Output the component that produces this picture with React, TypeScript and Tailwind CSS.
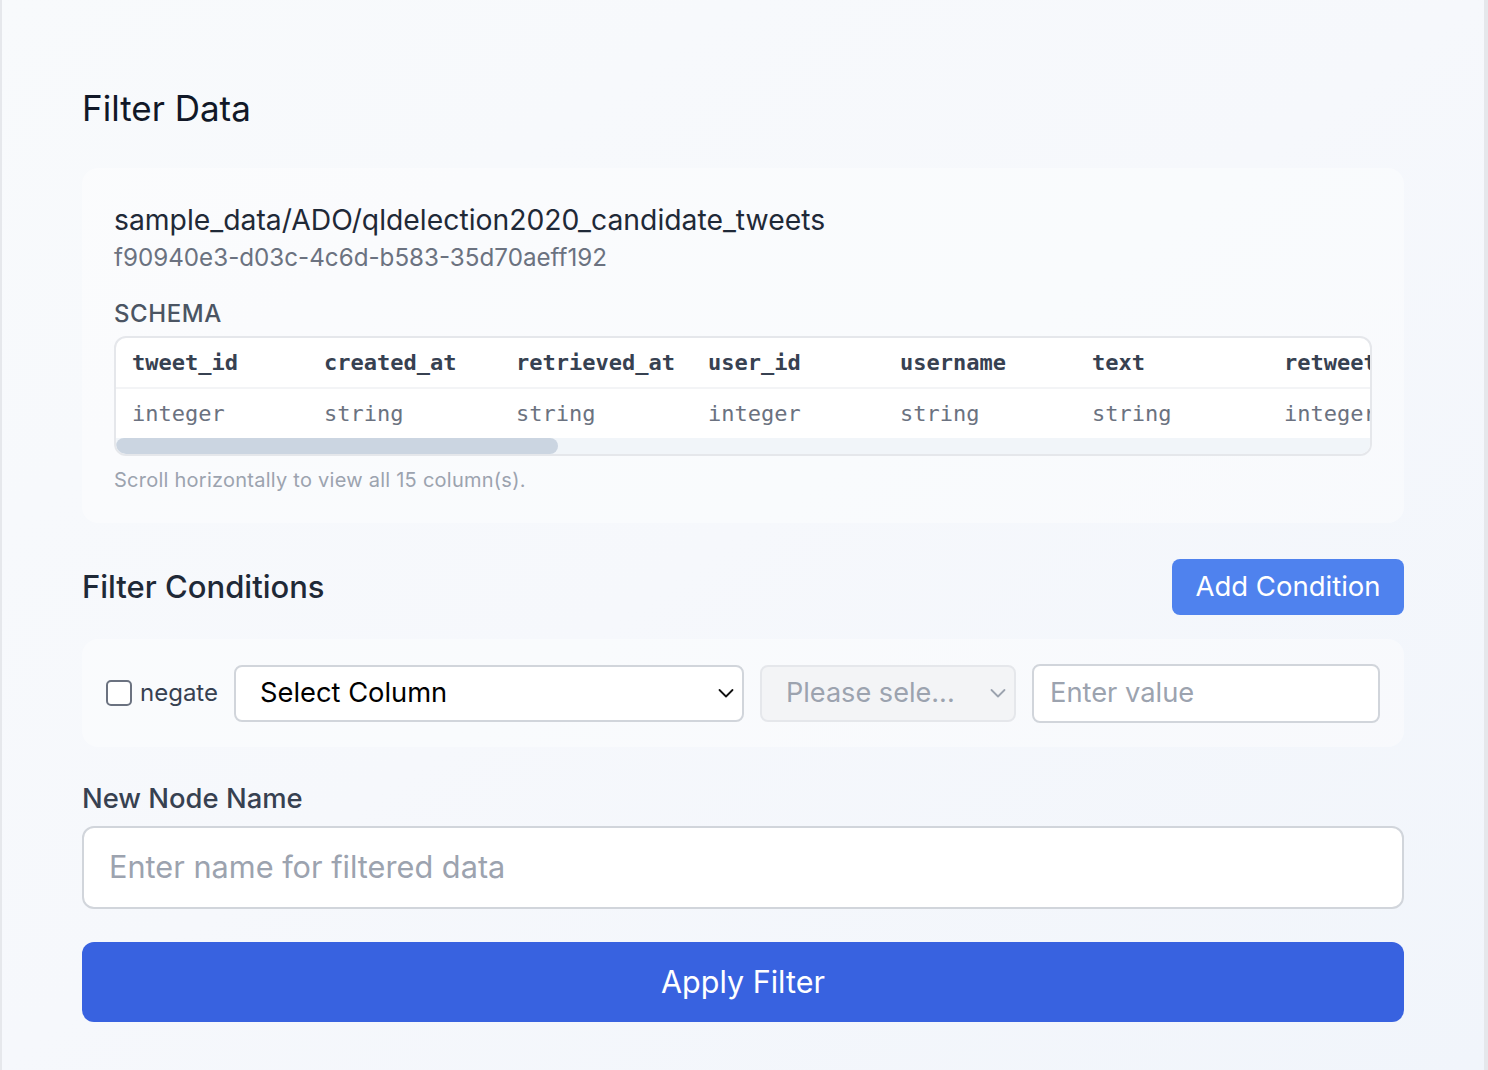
import React from "react";

const columns: [string, string, number][] = [
  ["tweet_id", "integer", 192],
  ["created_at", "string", 192],
  ["retrieved_at", "string", 192],
  ["user_id", "integer", 192],
  ["username", "string", 192],
  ["text", "string", 192],
  ["retweet_count", "integer", 240],
  ["favorite_count", "integer", 240],
  ["reply_count", "integer", 240],
  ["quote_count", "integer", 240],
  ["lang", "string", 192],
  ["source", "string", 192],
  ["is_retweet", "boolean", 240],
  ["hashtags", "string", 240],
  ["mentions", "string", 240],
];

function Chevron({ color }: { color: string }) {
  return (
    <svg width="20" height="20" viewBox="0 0 20 20" fill="none">
      <path d="M3.5 7 L10 13.5 L16.5 7" stroke={color} strokeWidth="1.8" strokeLinecap="round" strokeLinejoin="round" />
    </svg>
  );
}

export default function App() {
  return (
    <div
      className="flex h-[1070px] w-[1488px] overflow-hidden bg-[#e5e7eb]"
      style={{ fontFamily: "Inter, 'Noto Sans', sans-serif" }}
    >
      <div className="flex h-full w-[1484px] flex-col border-l-2 border-[#e6e8ec] bg-gradient-to-br from-[#f8fafc] via-[#f6f8fc] to-[#f1f5fb] px-[80px] pt-[84px]">
        <h1 className="text-[35px] leading-[48px] font-normal text-[#111827]">Filter Data</h1>

        <div className="mt-[36px] rounded-[16px] bg-white/40 px-[32px] pt-[32px] pb-[29px]">
          <div className="text-[28.3px] leading-[40px] text-[#1f2937]">sample_data/ADO/qldelection2020_candidate_tweets</div>
          <div className="text-[24.2px] leading-[36px] text-[#6b7280]">f90940e3-d03c-4c6d-b583-35d70aeff192</div>
          <div className="mt-[22px] text-[24px] leading-[32px] font-medium tracking-wide text-[#4b5563]">SCHEMA</div>
          <div className="mt-[6px] overflow-hidden rounded-[12px] border-2 border-[#e5e7eb] bg-white">
            <div className="overflow-hidden" style={{ fontFamily: "'DejaVu Sans Mono', monospace" }}>
              <div className="flex w-max border-b-2 border-[#f3f4f6]">
                {columns.map(([n, , w]) => (
                  <div key={n} className="h-[49px] shrink-0 px-[16px] text-[22px] leading-[49px] font-bold whitespace-nowrap text-[#374151]" style={{ width: w }}>
                    {n}
                  </div>
                ))}
              </div>
              <div className="flex w-max">
                {columns.map(([n, t, w]) => (
                  <div key={n} className="h-[49px] shrink-0 px-[16px] text-[22px] leading-[49px] whitespace-nowrap text-[#6b7280]" style={{ width: w }}>
                    {t}
                  </div>
                ))}
              </div>
            </div>
            <div className="h-[16px] bg-[#f1f5f9]">
              <div className="h-[16px] w-[442px] rounded-full bg-[#cbd5e1]" />
            </div>
          </div>
          <div className="mt-[10px] text-[20px] leading-[28px] tracking-[0.25px] text-[#9ca3af]">
            Scroll horizontally to view all 15 column(s).
          </div>
        </div>

        <div className="mt-[36px] flex h-[56px] items-center justify-between">
          <h2 className="text-[31px] font-medium text-[#1f2937]">Filter Conditions</h2>
          <button className="h-[56px] w-[232px] rounded-[8px] bg-[#4f82ee] text-[27.5px] text-white">Add Condition</button>
        </div>

        <div className="mt-[24px] flex h-[108px] items-center gap-[16px] rounded-[16px] bg-white/40 px-[24px]">
          <label className="flex items-center gap-[8px]">
            <span className="block h-[26px] w-[26px] rounded-[5px] border-2 border-[#6b7280] bg-white" />
            <span className="text-[24px] text-[#374151]">negate</span>
          </label>
          <div className="flex h-[57px] w-[510px] items-center justify-between rounded-[8px] border-2 border-[#d1d5db] bg-white pr-[6px] pl-[24px]">
            <span className="text-[27.3px] text-[#000000]">Select Column</span>
            <Chevron color="#111111" />
          </div>
          <div className="flex h-[57px] w-[256px] items-center justify-between rounded-[8px] border-2 border-[#e5e7eb] bg-[#f3f4f6] pr-[6px] pl-[24px]">
            <span className="text-[27.1px] text-[#9ca3af]">Please sele...</span>
            <Chevron color="#9ca3af" />
          </div>
          <div className="flex h-[59px] flex-1 items-center rounded-[8px] border-2 border-[#d1d5db] bg-white px-[16px]">
            <span className="text-[27.3px] text-[#9ca3af]">Enter value</span>
          </div>
        </div>

        <div className="mt-[33px] text-[27.4px] leading-[36px] font-medium text-[#374151]">New Node Name</div>
        <div className="mt-[10px] flex h-[83px] items-center rounded-[12px] border-2 border-[#d1d5db] bg-white px-[25px]">
          <span className="text-[30.7px] text-[#9ca3af]">Enter name for filtered data</span>
        </div>
        <button className="mt-[33px] h-[80px] w-full rounded-[12px] bg-[#3862e0] text-[30.5px] text-white">Apply Filter</button>
      </div>
    </div>
  );
}
